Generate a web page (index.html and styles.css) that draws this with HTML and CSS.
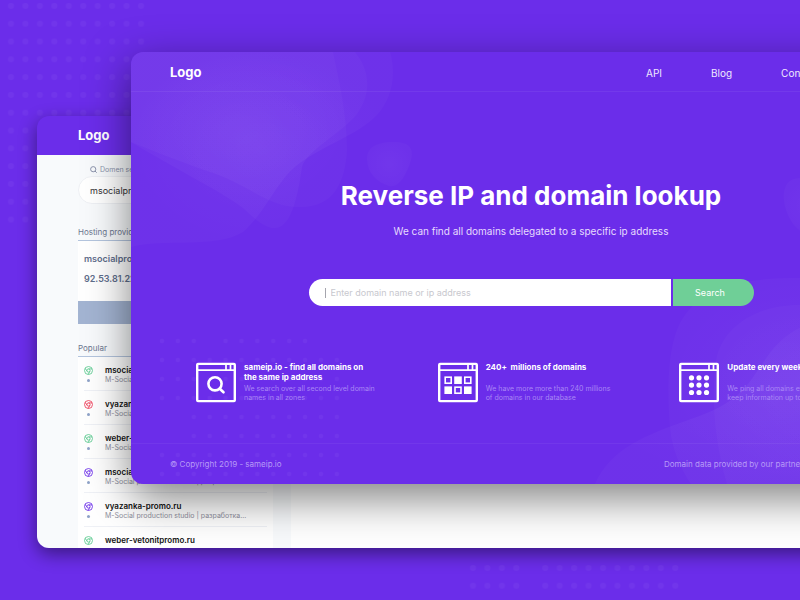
FILE: index.html
```html
<!DOCTYPE html>
<html lang="en">
<head>
<meta charset="utf-8">
<title>Reverse IP and domain lookup</title>
<link rel="stylesheet" href="styles.css">
</head>
<body>
<svg class="symbols" aria-hidden="true">
  <defs>
    <symbol id="chrome" viewBox="0 0 18 18">
      <g fill="none" stroke="currentColor" stroke-width="1.7">
        <circle cx="9" cy="9" r="8"/>
        <circle cx="9" cy="9" r="3.2"/>
        <path d="M2.4 4.6 6.2 10.6M9 5.8h7.3M11.8 10.6 8.2 17"/>
      </g>
    </symbol>
    <symbol id="frame" viewBox="0 0 40 40">
      <rect x="1.2" y="1.2" width="37.600" height="37.600" rx="1.5" fill="none" stroke="#fff" stroke-width="2.4"/>
      <path d="M1 7.7h38M30 1v6M34.5 1v6" fill="none" stroke="#fff" stroke-width="1.7"/>
    </symbol>
    <pattern id="dots" width="14.45" height="17.8" patternUnits="userSpaceOnUse">
      <circle cx="7" cy="8" r="3" fill="#fff" fill-opacity=".04"/>
    </pattern>
    <pattern id="fine-dots" width="15.9" height="19" patternUnits="userSpaceOnUse">
      <circle cx="8" cy="9" r="2.2" fill="#fff" fill-opacity=".04"/>
    </pattern>
    <radialGradient id="glow">
      <stop offset="0" stop-color="#fff" stop-opacity=".045"/>
      <stop offset="1" stop-color="#fff" stop-opacity=".022"/>
    </radialGradient>
  </defs>
</svg>

<svg class="dots dots-top" width="150" height="231" aria-hidden="true"><rect width="145" height="231" fill="url(#dots)"/></svg>
<svg class="dots dots-bottom" width="217" height="36" aria-hidden="true"><path d="M0 0h57.8v36H0zM72.2 0h144.5v36H72.2z" fill="url(#dots)"/></svg>

<section class="window results">
  <header class="results-head"><a class="logo" href="#">Logo</a></header>
  <div class="results-body">
    <aside class="sidebar">
      <label class="field-label" for="domain">
        <svg width="7" height="7" viewBox="0 0 14 14" fill="none" stroke="currentColor" stroke-width="2"><circle cx="6.4" cy="6.4" r="5.2"/><path d="m10 10 3.4 3.4"/></svg>
        Domen search
      </label>
      <input class="domain-input" id="domain" type="text" value="msocialproduction.com">
      <h2 class="side-title host-title">Hosting provider</h2>
      <div class="host-card">
        <p>msocialproduction.com</p>
        <p>92.53.81.222</p>
        <div class="host-bar"></div>
      </div>
      <h2 class="side-title popular-title">Popular</h2>
      <ul class="popular">
        <li class="green"><span class="marks"><svg><use href="#chrome"/></svg><i></i></span><div><a href="#">msocialproduction.com</a><p>M-Social production studio | разработка...</p></div></li>
        <li class="red"><span class="marks"><svg><use href="#chrome"/></svg><i></i></span><div><a href="#">vyazanka-promo.ru</a><p>M-Social production studio | разработка...</p></div></li>
        <li class="green"><span class="marks"><svg><use href="#chrome"/></svg><i></i></span><div><a href="#">weber-vetonitpromo.ru</a><p>M-Social production studio | разработка...</p></div></li>
        <li class="violet"><span class="marks"><svg><use href="#chrome"/></svg><i></i></span><div><a href="#">msocialproduction.com</a><p>M-Social production studio | разработка...</p></div></li>
        <li class="violet"><span class="marks"><svg><use href="#chrome"/></svg><i></i></span><div><a href="#">vyazanka-promo.ru</a><p>M-Social production studio | разработка...</p></div></li>
        <li class="green"><span class="marks"><svg><use href="#chrome"/></svg><i></i></span><div><a href="#">weber-vetonitpromo.ru</a></div></li>
      </ul>
    </aside>
    <div class="results-main"></div>
  </div>
</section>

<main class="window landing">
  <svg class="backdrop" aria-hidden="true">
    <g fill="url(#glow)">
      <path d="M0 0H202C207 25 216 60 216 98C214 130 203 155 170 155C140 156 120 135 85 122C55 112 25 100 0 90Z"/>
      <path d="M0 0H224C240 20 240 42 226 62C210 82 176 98 171 115C168 135 162 176 144 176C130 176 118 160 108 153C80 134 50 120 0 90Z"/>
      <path d="M0 0H259C266 24 260 48 246 63C226 84 193 92 165 114C145 130 135 160 112 180C85 197 30 186 0 195Z"/>
      <path d="M236 108C235 92 252 90 263 90C278 90 283 96 280 108C275 124 268 136 258 134C246 130 237 122 236 108Z"/>
      <path d="M810 226H669C625 226 575 230 552 266C534 294 537 350 539 375C541 400 552 420 560 432H810Z"/>
      <path d="M810 253H669C625 253 594 274 586 304C580 335 582 385 596 432H810Z"/>
      <path d="M464 432C480 396 515 383 560 367C610 350 615 335 636 305C650 285 665 275 690 268H810V432Z"/>
      <path d="M669 126C650 126 650 148 657 163C662 174 667 178 675 182H720V126Z"/>
    </g>
    <g transform="translate(23 280)" fill="url(#fine-dots)"><path d="M0 0h47.700v19H0zM63.600 0H159v19H63.600zM0 19h190.800v57H0zM31.800 76h159v38h-159zM0 114h190.800v38H0z"/></g>
  </svg>
  <header class="top">
    <a class="logo" href="#">Logo</a>
    <nav class="menu"><a href="#">API</a><a href="#">Blog</a><a href="#">Contacts</a></nav>
  </header>
  <section class="hero">
    <h1>Reverse IP and domain lookup</h1>
    <p>We can find all domains delegated to a specific ip address</p>
    <form class="search">
      <div class="search-field"><input type="text" placeholder="Enter domain name or ip address" aria-label="Domain name or ip address"></div>
      <button type="submit">Search</button>
    </form>
  </section>
  <section class="features">
    <article>
      <svg class="icon" viewBox="0 0 40 40"><use href="#frame"/><g fill="none" stroke="#fff" stroke-width="2.6" stroke-linecap="round"><circle cx="19" cy="21.300" r="6.600"/><path d="m23.800 26.200 3.700 3.600"/></g></svg>
      <div><h3>sameip.io - find all domains on<br>the same ip address</h3><p>We search over all second level domain<br>names in all zones</p></div>
    </article>
    <article>
      <svg class="icon" viewBox="0 0 40 40"><use href="#frame"/><g stroke="#fff" stroke-width="1.600"><g fill="none"><rect x="7.200" y="14.700" width="6" height="6"/><rect x="26.800" y="14.700" width="6" height="6"/><rect x="17" y="24.700" width="6" height="6"/></g><g fill="#fff"><rect x="17" y="14.700" width="6" height="6"/><rect x="7.200" y="24.700" width="6" height="6"/><rect x="26.800" y="24.700" width="6" height="6"/></g></g></svg>
      <div><h3>240+&nbsp; millions of domains</h3><p>We have more more than 240 millions<br>of domains in our database</p></div>
    </article>
    <article>
      <svg class="icon" viewBox="0 0 40 40"><use href="#frame"/><g fill="#fff"><circle cx="12.500" cy="15.300" r="2.600"/><circle cx="20" cy="15.300" r="2.600"/><circle cx="27.500" cy="15.300" r="2.600"/><circle cx="12.500" cy="22.600" r="2.600"/><circle cx="20" cy="22.600" r="2.600"/><circle cx="27.500" cy="22.600" r="2.600"/><circle cx="12.500" cy="30" r="2.600"/><circle cx="20" cy="30" r="2.600"/><circle cx="27.500" cy="30" r="2.600"/></g></svg>
      <div><h3>Update every week</h3><p>We ping all domains every week to<br>keep information up to date</p></div>
    </article>
  </section>
  <footer class="bottom"><span>© Copyright 2019 - sameip.io</span><span class="credit">Domain data provided by our partners</span></footer>
</main>
</body>
</html>
```
FILE: styles.css
```css
* { box-sizing: border-box; }

body {
  margin: 0;
  position: relative;
  height: 100vh;
  overflow: hidden;
  background: #6b2dea;
  color: #fff;
  font-family: Inter, "Open Sans", sans-serif;
}

h1, h2, h3, p, ul { margin: 0; padding: 0; }
a { color: inherit; text-decoration: none; }

.symbols { position: absolute; width: 0; height: 0; }
.dots { position: absolute; }
.dots-top { left: 4px; top: -2px; }
.dots-bottom { left: 466px; top: 560px; }

.window {
  position: absolute;
  overflow: hidden;
  border-radius: 12px;
  background: #6b2dea;
}
.logo { display: block; font-size: 13px; font-weight: 700; line-height: 16px; }

/* Results window */
.results {
  left: 37px;
  top: 116px;
  right: -40px;
  bottom: 52px;
  display: flex;
  flex-direction: column;
  box-shadow: 0 6px 18px rgba(0, 0, 0, .45);
}
.results-head { flex: none; height: 39px; padding: 11px 41px; }
.results-body { flex: 1; min-height: 0; display: flex; background: #f8fafc; }
.sidebar { flex: none; width: 254px; padding: 9px 18px 0 41px; }
.results-main { flex: 1; background: #fff; }
.field-label {
  display: flex;
  align-items: center;
  gap: 3px;
  height: 10px;
  margin-left: 12px;
  color: #8b93ab;
  font-size: 7px;
}
.domain-input {
  display: block;
  width: 100%;
  height: 28px;
  margin-top: 2px;
  padding: 0 11px;
  border: 1px solid #eef0f4;
  border-radius: 14px;
  background: #fff;
  color: #333;
  font: 9px Inter, "Open Sans", sans-serif;
}
.side-title {
  padding-bottom: 2px;
  border-bottom: 1px solid #b4c5de;
  color: #6d7890;
  font-size: 8px;
  font-weight: 400;
  line-height: 12px;
}
.host-title { margin-top: 22px; }
.popular-title { margin-top: 18px; }
.host-card {
  padding-top: 8px;
  background: #fff;
  color: #5f6e8c;
  font-size: 9px;
  font-weight: 600;
  line-height: 20px;
}
.host-card p { padding-left: 6px; }
.host-bar { height: 23px; margin-top: 12px; background: #a3b4d2; }

.popular { background: #fff; padding: 0 6px; list-style: none; }
.popular li {
  display: flex;
  height: 34px;
  gap: 12px;
  padding-top: 8px;
  border-bottom: 1px solid #eff1f6;
  line-height: 10px;
  white-space: nowrap;
}
.popular a { display: block; color: #111; font-size: 8px; font-weight: 600; }
.popular p { color: #8f909e; font-size: 7px; }
.marks { display: flex; flex-direction: column; align-items: center; gap: 4px; padding-top: 1px; }
.marks svg { width: 9px; height: 9px; }
.marks i { width: 3px; height: 3px; border-radius: 50%; background: #8fa3c8; }
.green { color: #5ccb90; }
.red { color: #ee3d59; }
.violet { color: #6b2dea; }

/* Landing window */
.landing {
  left: 131px;
  top: 52px;
  width: 100%;
  box-shadow: 0 14px 44px rgba(0, 0, 0, .5);
}
.landing > * { position: relative; }
.landing .backdrop { position: absolute; left: 0; top: 0; width: 100%; height: 100%; }
.top {
  display: flex;
  justify-content: space-between;
  align-items: center;
  height: 40px;
  padding: 0 39px;
  border-bottom: 1px solid rgba(255, 255, 255, .06);
}
.menu { display: flex; gap: 49px; width: 246px; padding-top: 3px; color: #efe8fe; font-size: 10px; }

.hero { padding-top: 86px; text-align: center; }
.hero h1 { font-size: 26px; font-weight: 700; line-height: 36px; }
.hero p { margin-top: 9px; color: #e6dbfd; font-size: 10px; line-height: 16px; }
.search { display: flex; gap: 2px; width: 445px; height: 27px; margin: 40px auto 0; }
.search-field {
  flex: 1;
  display: flex;
  align-items: center;
  gap: 5px;
  padding-left: 16px;
  border-radius: 14px 0 0 14px;
  background: #fff;
}
.search-field::before { content: ""; width: 1px; height: 10px; background: #a5a5ad; }
.search input {
  flex: 1;
  padding: 0;
  border: 0;
  outline: 0;
  background: none;
  color: #333;
  font: 9px Inter, "Open Sans", sans-serif;
}
.search input::placeholder { color: #c8c8ce; }
.search button {
  width: 81px;
  padding: 0 6px 0 0;
  border: 0;
  border-radius: 0 14px 14px 0;
  background: #6fcf97;
  color: #fff;
  font: 9px Inter, "Open Sans", sans-serif;
}

.features {
  display: grid;
  grid-template-columns: repeat(3, 1fr);
  padding: 56px 10px 0 65px;
}
.features article { display: flex; gap: 8px; white-space: nowrap; }
.icon { flex: none; width: 40px; height: 41px; }
.features h3 { min-height: 22px; font-size: 8px; font-weight: 700; line-height: 10px; }
.features p { color: #a987f5; font-size: 7px; line-height: 9px; }

.bottom {
  display: flex;
  justify-content: space-between;
  align-items: center;
  height: 41px;
  margin-top: 40px;
  padding: 0 39px;
  border-top: 1px solid rgba(255, 255, 255, .05);
  color: #b79af7;
  font-size: 8px;
}
.credit { width: 228px; }
```
